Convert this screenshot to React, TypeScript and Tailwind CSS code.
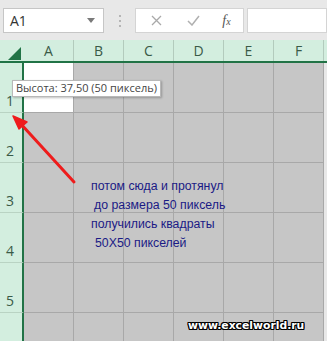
import React from "react";

const cols = ["A", "B", "C", "D", "E", "F"];
const rows = [1, 2, 3, 4, 5, 6];

export default function App() {
  return (
    <div
      className="relative w-[327px] h-[341px] overflow-hidden bg-[#e8e8e8]"
      style={{ fontFamily: '"Segoe UI", "Open Sans", "Noto Sans", sans-serif' }}
    >
      {/* formula bar */}
      <div className="flex h-[40px] items-start pt-[8px] pl-[3px]">
        <div className="flex h-[25px] w-[101px] items-center justify-between border border-[#c6c6c6] bg-white pl-[6px] pr-[8px]">
          <span className="text-[14px] text-[#333] leading-none">A1</span>
          <svg width="8" height="5" viewBox="0 0 8 5">
            <path d="M0 0 L8 0 L4 5 Z" fill="#7a7a7a" />
          </svg>
        </div>
        <div className="flex w-[31px] h-[25px] flex-col items-center justify-center gap-[3px]">
          <span className="block w-[2px] h-[2px] bg-[#b5b5b5]" />
          <span className="block w-[2px] h-[2px] bg-[#b5b5b5]" />
          <span className="block w-[2px] h-[2px] bg-[#b5b5b5]" />
        </div>
        <div className="flex h-[25px] w-[109px] items-center border border-[#d4d4d4] bg-white">
          <div className="flex w-[36px] justify-center pl-[4px]">
            <svg width="11" height="11" viewBox="0 0 11 11">
              <path d="M1 1 L10 10 M10 1 L1 10" stroke="#a9a9a9" strokeWidth="1.3" />
            </svg>
          </div>
          <div className="flex w-[38px] justify-center pl-[4px]">
            <svg width="13" height="11" viewBox="0 0 13 11">
              <path d="M1 6 L5 10 L12 1" stroke="#b0b0b0" strokeWidth="1.5" fill="none" />
            </svg>
          </div>
          <div className="flex flex-1 justify-center">
            <span
              className="text-[14px] italic text-[#555] leading-none"
              style={{ fontFamily: '"Liberation Serif", serif' }}
            >
              f<span className="text-[10px]">x</span>
            </span>
          </div>
        </div>
        <div className="ml-[3px] h-[25px] flex-1 border border-[#d4d4d4] bg-white" />
      </div>

      {/* column header */}
      <div className="flex h-[23px] border-b-2 border-[#217346] bg-[#d3eedf]">
        <div className="relative w-[24px] shrink-0">
          <svg className="absolute left-[8px] top-[7px]" width="13" height="13" viewBox="0 0 13 13">
            <path d="M13 0 L13 13 L0 13 Z" fill="#217346" />
          </svg>
        </div>
        {cols.map((c) => (
          <div
            key={c}
            className="flex w-[50px] shrink-0 items-center justify-center border-r border-[#b3cbbd] text-[14px] text-[#3a5a47]"
          >
            {c}
          </div>
        ))}
      </div>

      {/* grid */}
      {rows.map((r) => (
        <div key={r} className="flex h-[50px]">
          <div className="flex w-[24px] shrink-0 items-end justify-center border-r-2 border-b border-r-[#217346] border-b-[#b9d3c3] bg-[#d3eedf] pb-[1px] pr-[2px] text-[14px] text-[#3a5a47]">
            {r < 6 ? r : null}
          </div>
          {cols.map((c) => (
            <div
              key={c}
              className={
                r === 1 && c === "A"
                  ? "w-[50px] shrink-0 border-r border-b border-[#a8a8a8] bg-white"
                  : "w-[50px] shrink-0 border-r border-b border-[#a8a8a8] bg-[#c6c6c6]"
              }
            />
          ))}
        </div>
      ))}

      {/* tooltip */}
      <div className="absolute left-[12px] top-[80px] flex h-[17px] items-center border border-[#b8b8b8] bg-white px-[3px] text-[11px] text-[#444] shadow-[1px_1px_2px_rgba(0,0,0,0.25)]">
        Высота: 37,50 (50 пиксель)
      </div>

      {/* arrow */}
      <svg className="absolute left-0 top-0" width="327" height="341" viewBox="0 0 327 341">
        <path d="M74 182 L20 123" stroke="#ee1c1c" strokeWidth="3" strokeLinecap="round" />
        <path d="M13 116 L27 122 L19 129 Z" fill="#ee1c1c" stroke="#ee1c1c" strokeWidth="1.5" strokeLinejoin="round" />
      </svg>

      {/* annotation text */}
      <div
        className="absolute left-[91px] top-[177px] flex flex-col text-[12.3px] leading-[19px] text-[#1a1a85]"
        style={{ fontFamily: '"Liberation Sans", Arial, sans-serif' }}
      >
        <span>потом сюда и протянул</span>
        <span className="pl-[3px]">до размера 50 пиксель</span>
        <span>получились квадраты</span>
        <span className="pl-[4px]">50X50 пикселей</span>
      </div>

      {/* watermark */}
      <div
        className="absolute left-[188px] top-[321px] text-[10.8px] font-bold leading-none text-white"
        style={{
          fontFamily: '"DejaVu Sans", Verdana, sans-serif',
          textShadow:
            "1px 0 0 #000, -1px 0 0 #000, 0 1px 0 #000, 0 -1px 0 #000, 1px 1px 0 #000, -1px -1px 0 #000, 1px -1px 0 #000, -1px 1px 0 #000",
        }}
      >
        www.excelworld.ru
      </div>
    </div>
  );
}
